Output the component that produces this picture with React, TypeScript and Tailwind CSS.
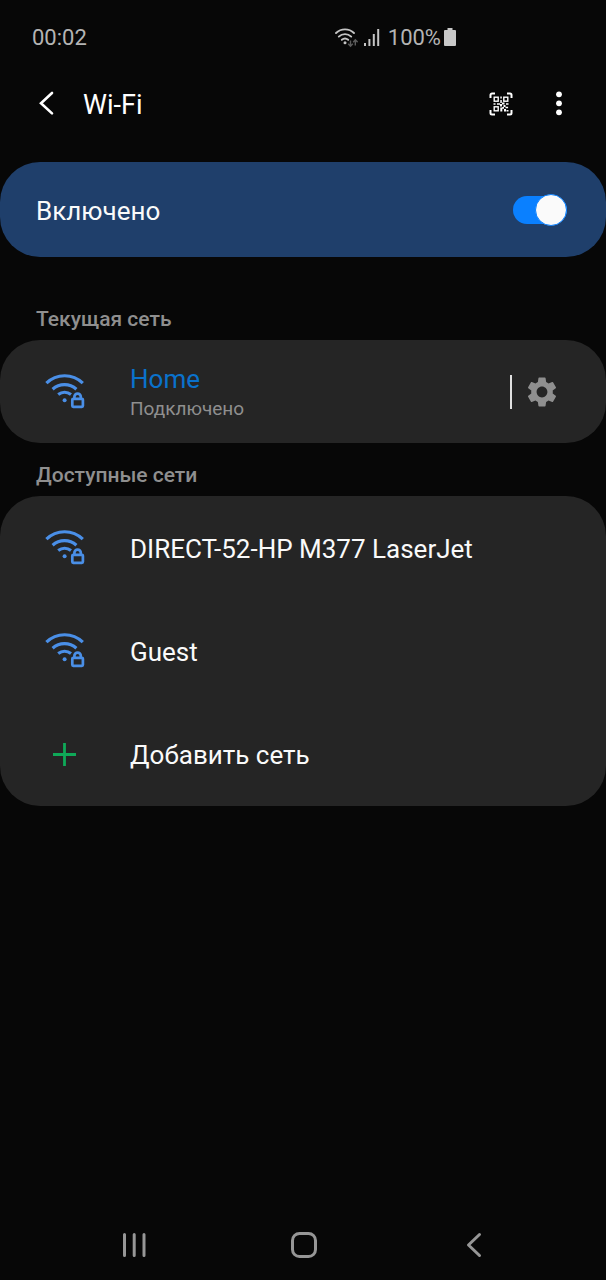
import { useState } from "react";

interface Network {
  name: string;
}

const networks: Network[] = [
  { name: "DIRECT-52-HP M377 LaserJet" },
  { name: "Guest" },
];

function StatusBar() {
  return (
    <div className="flex h-[76px] items-center justify-between pr-[149px] pl-8 text-[22px] leading-6 text-[#b4b4b4]">
      <span>00:02</span>
      <div className="flex items-center">
        <svg width="24" height="20" viewBox="0 0 24 20" fill="none" aria-hidden="true">
          <g stroke="#c4c4c4" strokeWidth="1.9" strokeLinecap="round">
            <path d="M2 5A13 13 0 0 1 20 5" />
            <path d="M4.8 8.6A9 9 0 0 1 17.2 8.6" />
            <path d="M7.8 11.8A5 5 0 0 1 14.2 11.8" />
          </g>
          <circle cx="11" cy="14.8" r="1.5" fill="#c4c4c4" />
          <g stroke="#5c5c5c" strokeWidth="1.4">
            <path d="M16.5 12.5V18M14.2 15.8L16.5 18.2L18.8 15.8" />
            <path d="M21.3 17.5V12M19.2 14.2L21.3 11.8L23.6 14.2" />
          </g>
        </svg>
        <svg className="ml-1.5" width="16" height="18" viewBox="0 0 16 18" aria-hidden="true">
          <g fill="#c4c4c4">
            <rect x="0" y="14" width="2" height="3" />
            <rect x="4.4" y="10" width="2" height="7" />
            <rect x="8.8" y="5" width="2" height="12" />
            <rect x="13.2" y="0" width="2" height="17" />
          </g>
        </svg>
        <span className="ml-2">100%</span>
        <svg className="ml-0.5" width="14" height="20" viewBox="0 0 14 20" aria-hidden="true">
          <path
            d="M4.5 0h5v2H12a1 1 0 0 1 1 1v14a1 1 0 0 1-1 1H2a1 1 0 0 1-1-1V3a1 1 0 0 1 1-1h2.5z"
            fill="#c8c8c8"
          />
        </svg>
      </div>
    </div>
  );
}

function QrIcon() {
  return (
    <svg width="24" height="24" viewBox="0 0 24 24" fill="none" aria-hidden="true">
      <g stroke="#fff" strokeWidth="2">
        <path d="M1.5 6V3a1.5 1.5 0 0 1 1.5-1.5h3M18 1.5h3A1.5 1.5 0 0 1 22.5 3v3M22.5 18v3a1.5 1.5 0 0 1-1.5 1.5h-3M6 22.5H3A1.5 1.5 0 0 1 1.5 21v-3" />
      </g>
      <g stroke="#fff" strokeWidth="1.4">
        <rect x="5.2" y="5.2" width="4" height="4" />
        <rect x="14.8" y="5.2" width="4" height="4" />
        <rect x="5.2" y="14.8" width="4" height="4" />
      </g>
      <path
        d="M11.3 4.5h1.5v2h-1.5zM11.3 8h1.5v3h-1.5zM4.5 11.3h2v1.5h-2zM8 11.3h3v1.5H8zM11 12h2v2.5h-2zM13 10.5h2.5v2H13zM17 11.3h2.5v1.5H17zM14.5 13h2v2h-2zM11.3 15.5h2v4h-2zM13.3 15h1.7v1.7h-1.7zM16.5 14.8h2.6v1.5h-2.6zM15 17h2v2.5h-2zM17.5 18h2v1.5h-2z"
        fill="#fff"
      />
    </svg>
  );
}

function WifiLockIcon() {
  return (
    <svg width="42" height="38" viewBox="0 0 42 38" fill="none" aria-hidden="true">
      <g stroke="#4a8fe7" strokeWidth="3.2">
        <path d="M2.4 10.2A26 26 0 0 1 38.8 10.2" />
        <path d="M8.6 16.2A18 18 0 0 1 32.4 16.2" />
        <path d="M14.2 21.6A10.5 10.5 0 0 1 27 21.6" />
      </g>
      <circle cx="20.6" cy="27.2" r="2" fill="#4a8fe7" />
      <g stroke="#4a8fe7" strokeWidth="2.7">
        <rect x="28.3" y="25.8" width="10.6" height="8" rx="1" />
        <path d="M30.4 25.6v-1.8a3.2 3.2 0 0 1 6.4 0v1.8" />
      </g>
    </svg>
  );
}

function GearIcon() {
  return (
    <svg width="36" height="36" viewBox="0 0 24 24" fill="#8f8f8f" aria-hidden="true">
      <path d="M19.14 12.94c.04-.3.06-.61.06-.94 0-.32-.02-.64-.07-.94l2.03-1.58a.49.49 0 0 0 .12-.61l-1.92-3.32a.488.488 0 0 0-.59-.22l-2.39.96c-.5-.38-1.03-.7-1.62-.94l-.36-2.54a.484.484 0 0 0-.48-.41h-3.84c-.24 0-.43.17-.47.41l-.36 2.54c-.59.24-1.13.57-1.62.94l-2.39-.96c-.22-.08-.47 0-.59.22L2.74 8.87c-.12.21-.08.47.12.61l2.03 1.58c-.05.3-.09.63-.09.94s.02.64.07.94l-2.03 1.58a.49.49 0 0 0-.12.61l1.92 3.32c.12.22.37.29.59.22l2.39-.96c.5.38 1.03.7 1.62.94l.36 2.54c.05.24.24.41.48.41h3.84c.24 0 .44-.17.47-.41l.36-2.54c.59-.24 1.13-.56 1.62-.94l2.39.96c.22.08.47 0 .59-.22l1.92-3.32c.12-.22.07-.47-.12-.61l-2.01-1.58zM12 15.6c-1.98 0-3.6-1.62-3.6-3.6s1.62-3.6 3.6-3.6 3.6 1.62 3.6 3.6-1.62 3.6-3.6 3.6z" />
    </svg>
  );
}

function Header() {
  return (
    <header className="flex h-14 items-center pr-9 pl-8 text-white">
      <button type="button" aria-label="Назад" className="flex w-[51px] pl-1.5">
        <svg width="18" height="26" viewBox="0 0 18 26" fill="none" aria-hidden="true">
          <path d="M14 2L3 12.2L14 22.4" stroke="#fff" strokeWidth="2.6" strokeLinecap="round" />
        </svg>
      </button>
      <h1 className="pt-0.5 text-[27px] leading-8">Wi-Fi</h1>
      <div className="ml-auto flex items-center gap-[34px]">
        <button type="button" aria-label="QR-код">
          <QrIcon />
        </button>
        <button type="button" aria-label="Ещё" className="flex w-[23px] justify-center">
          <svg width="8" height="26" viewBox="0 0 8 26" fill="#fff" aria-hidden="true">
            <circle cx="4" cy="3.3" r="2.9" />
            <circle cx="4" cy="12.3" r="2.9" />
            <circle cx="4" cy="21.3" r="2.9" />
          </svg>
        </button>
      </div>
    </header>
  );
}

function NetworkRow({ name }: Network) {
  return (
    <li>
      <button type="button" className="flex min-h-[103px] w-full items-center pl-11 text-left">
        <WifiLockIcon />
        <span className="ml-11 pt-0.5 text-[26px] leading-8 text-[#fafafa]">{name}</span>
      </button>
    </li>
  );
}

function NavBar() {
  return (
    <nav className="mt-auto flex h-[70px] items-center px-12">
      <button type="button" aria-label="Недавние" className="flex flex-1 justify-center">
        <svg width="26" height="26" viewBox="0 0 26 26" aria-hidden="true">
          <path d="M4.5 2.5v21M14.2 2.5v21M24 2.5v21" stroke="#969696" strokeWidth="3" strokeLinecap="round" />
        </svg>
      </button>
      <button type="button" aria-label="Главный экран" className="flex flex-1 justify-center">
        <svg width="28" height="28" viewBox="0 0 28 28" fill="none" aria-hidden="true">
          <rect x="3.5" y="2.5" width="23" height="23" rx="7" stroke="#969696" strokeWidth="3" />
        </svg>
      </button>
      <button type="button" aria-label="Назад" className="flex flex-1 justify-center">
        <svg width="18" height="26" viewBox="0 0 18 26" fill="none" aria-hidden="true">
          <path d="M15.5 2.5L4.5 13L15.5 23.5" stroke="#969696" strokeWidth="3" strokeLinecap="round" strokeLinejoin="round" />
        </svg>
      </button>
    </nav>
  );
}

export default function App() {
  const [enabled, setEnabled] = useState(true);

  return (
    <div className="flex min-h-screen flex-col bg-[#070707] font-['Roboto',sans-serif]">
      <StatusBar />
      <Header />

      <main>
        <label className="mt-[30px] flex min-h-[95px] items-center justify-between rounded-[40px] bg-[#1f3f6b] pr-[39px] pl-9">
          <span className="pt-0.5 text-[26px] leading-8 text-[#fafafa]">Включено</span>
          <input
            type="checkbox"
            role="switch"
            checked={enabled}
            onChange={(e) => setEnabled(e.target.checked)}
            className="flex h-7 w-[54px] appearance-none items-center rounded-full bg-[#6b7280] before:size-8 before:rounded-full before:border before:border-[#0a80ff] before:bg-[#fafafa] checked:justify-end checked:bg-[#0a80ff]"
          />
        </label>

        <section>
          <h2 className="mt-[50px] pb-[9px] pl-9 text-[21px] leading-6 font-medium text-[#8f8f8f]">
            Текущая сеть
          </h2>
          <div className="flex min-h-[103px] items-center rounded-[40px] bg-[#252525] pr-[46px] pl-11">
            <button type="button" className="flex flex-1 items-center text-left">
              <WifiLockIcon />
              <span className="ml-11 flex flex-col pt-0.5">
                <span className="text-[26px] leading-8 text-[#0a72cc]">Home</span>
                <span className="text-[19px] leading-7 text-[#8f8f8f]">Подключено</span>
              </span>
            </button>
            <button
              type="button"
              aria-label="Настройки сети"
              className="flex h-[34px] items-center border-l-2 border-[#e0e0e0] pl-3"
            >
              <GearIcon />
            </button>
          </div>
        </section>

        <section>
          <h2 className="mt-5 pb-[9px] pl-9 text-[21px] leading-6 font-medium text-[#8f8f8f]">
            Доступные сети
          </h2>
          <ul className="rounded-[40px] bg-[#252525] pb-px">
            {networks.map((network) => (
              <NetworkRow key={network.name} name={network.name} />
            ))}
            <li>
              <button type="button" className="flex min-h-[103px] w-full items-center pl-11 text-left">
                <svg width="42" height="38" viewBox="0 0 42 38" aria-hidden="true">
                  <path d="M20.5 8v23M9 19.5h23" stroke="#0fa958" strokeWidth="2.8" />
                </svg>
                <span className="ml-11 pt-0.5 text-[26px] leading-8 text-[#fafafa]">Добавить сеть</span>
              </button>
            </li>
          </ul>
        </section>
      </main>

      <NavBar />
    </div>
  );
}
